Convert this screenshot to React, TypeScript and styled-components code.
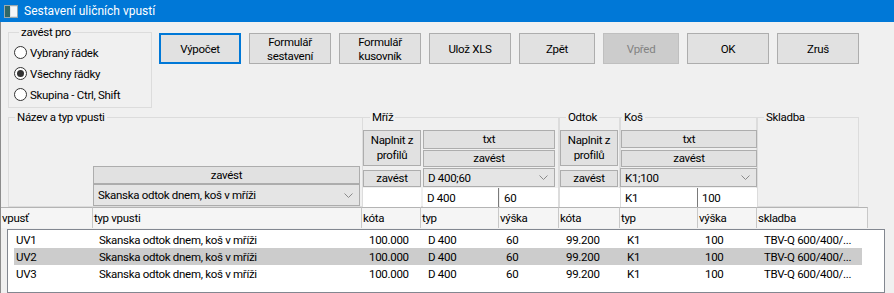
import styled, { createGlobalStyle } from 'styled-components';

const FONT = 'Roboto, "Liberation Sans", sans-serif';

const GlobalStyle = createGlobalStyle`
  html, body {
    margin: 0;
    padding: 0;
    background: #f0f0f0;
  }
  body {
    font-family: ${FONT};
    font-size: 11.5px;
    letter-spacing: -0.3px;
    color: #000;
  }
  * {
    box-sizing: border-box;
  }
`;

const Window = styled.div`
  width: 894px;
  height: 293px;
  overflow: hidden;
  background: #f0f0f0;
  display: flex;
  flex-direction: column;
`;

const TitleBar = styled.div`
  flex: none;
  height: 22px;
  background: #0078d7;
  color: #fff;
  display: flex;
  align-items: center;
  gap: 6px;
  padding-left: 4px;
  font-size: 12px;
  letter-spacing: 0;
`;

const Body = styled.div`
  flex: 1;
  display: flex;
  flex-direction: column;
  border-left: 1px solid #8c8c8c;
`;

const TopRow = styled.div`
  display: flex;
  gap: 7px;
  padding: 3px 0 0 7px;
`;

const Frame = styled.fieldset<{ $offset?: number }>`
  margin: 0;
  padding: 0;
  min-width: 0;
  border: 1px solid #dcdcdc;
  font-size: 11.5px;

  & > legend {
    margin-left: ${({ $offset }) => $offset ?? 5}px;
    padding: 0 2px;
    line-height: 15px;
  }
`;

const OptionsFrame = styled(Frame)`
  width: 144px;
  height: 83px;
  padding: 2px 0 0 5px;
  display: flex;
  flex-direction: column;
`;

const RadioRow = styled.label`
  height: 21px;
  display: flex;
  align-items: center;
  gap: 3px;
`;

const RadioDot = styled.span<{ $checked?: boolean }>`
  width: 13px;
  height: 13px;
  border-radius: 50%;
  border: 1px solid #333;
  background: #fff;
  display: flex;
  align-items: center;
  justify-content: center;

  &::after {
    content: '';
    width: 7px;
    height: 7px;
    border-radius: 50%;
    background: ${({ $checked }) => ($checked ? '#333' : 'transparent')};
  }
`;

const ButtonRow = styled.div`
  display: flex;
  gap: 8px;
  margin-top: 8px;
  height: 31px;
`;

const Button = styled.button<{ $narrow?: boolean; $default?: boolean }>`
  width: ${({ $narrow }) => ($narrow ? 76 : 82)}px;
  height: 31px;
  padding: 0;
  font-family: ${FONT};
  font-size: 11.5px;
  letter-spacing: -0.3px;
  line-height: 14px;
  color: #000;
  background: #e1e1e1;
  border: ${({ $default }) => ($default ? '2px solid #0078d7' : '1px solid #adadad')};

  &:disabled {
    background: #cccccc;
    border-color: #bfbfbf;
    color: #838383;
  }
`;

const Columns = styled.div`
  display: grid;
  grid-template-columns: 92px 269px 59px 78px 60px 61px 78px 59px 111px;
  grid-template-rows: 20px 19px 18px 20px 20px 21px;
  margin-top: 2px;
`;

const GroupFrame = styled(Frame)<{ $col: string }>`
  grid-column: ${({ $col }) => $col};
  grid-row: 1 / 6;
`;

const CellButton = styled.button<{ $col: string; $row: string }>`
  grid-column: ${({ $col }) => $col};
  grid-row: ${({ $row }) => $row};
  padding: 0;
  font-family: ${FONT};
  font-size: 11.5px;
  letter-spacing: -0.3px;
  line-height: 15px;
  color: #000;
  background: #e1e1e1;
  border: 1px solid #adadad;
`;

const Combo = styled.div<{ $col?: string; $row?: string }>`
  grid-column: ${({ $col }) => $col ?? 'auto'};
  grid-row: ${({ $row }) => $row ?? 'auto'};
  display: flex;
  align-items: center;
  justify-content: space-between;
  padding: 0 6px 0 4px;
  background: #e5e5e5;
  border: 1px solid #acacac;
`;

const InputCell = styled.div<{ $col: string; $divider?: boolean }>`
  grid-column: ${({ $col }) => $col};
  grid-row: 5;
  margin-top: 1px;
  padding-left: 4px;
  display: flex;
  align-items: center;
  background: #fff;
  border-right: ${({ $divider }) => ($divider ? '1px solid #7a7a7a' : 'none')};
`;

const NameStack = styled.div`
  grid-column: 2;
  grid-row: 3 / 6;
  margin: 0 2px 1px 0;
  display: flex;
  flex-direction: column;
  justify-content: flex-end;
`;

const HeaderCell = styled.div`
  grid-row: 6;
  padding-left: 1px;
  display: flex;
  align-items: center;
  background: #f5f5f5;
  border-top: 1px solid #b4b4b4;
  border-right: 1px solid #c8c8c8;
`;

const List = styled.div`
  flex: 1;
  margin: 1px 9px 0 6px;
  padding: 1px 0 0 6px;
  background: #fff;
  border: 1px solid #828790;
`;

const Row = styled.div<{ $selected?: boolean }>`
  width: 848px;
  height: 17px;
  display: grid;
  grid-template-columns: 79px 269px 59px 78px 60px 61px 78px 59px 105px;
  align-items: center;
  background: ${({ $selected }) => ($selected ? '#cccccc' : 'transparent')};

  & > span {
    padding-left: 7px;
    white-space: nowrap;
  }
  & > span:first-child {
    padding-left: 2px;
  }
  & > span:nth-child(2) {
    padding-left: 6px;
  }
`;

const Chevron = () => (
  <svg width="9" height="5" viewBox="0 0 9 5">
    <polyline points="0.5,0.5 4.5,4.5 8.5,0.5" fill="none" stroke="#8a8a8a" strokeWidth="1" />
  </svg>
);

const AppIcon = () => (
  <svg width="14" height="13" viewBox="0 0 14 13">
    <rect x="0.5" y="0.5" width="13" height="12" fill="#dde3e6" stroke="#9aa8ad" />
    <rect x="1" y="1" width="5" height="11" fill="#2e6767" />
    <rect x="7" y="2" width="6" height="9" fill="#f5f7f8" />
  </svg>
);

const headers = ['vpusť', 'typ vpusti', 'kóta', 'typ', 'výška', 'kóta', 'typ', 'výška', 'skladba'];

const rows = ['UV1', 'UV2', 'UV3'].map((id) => [
  id,
  'Skanska odtok dnem, koš v mříži',
  '100.000',
  'D 400',
  '60',
  '99.200',
  'K1',
  '100',
  'TBV-Q 600/400/...',
]);

export default function App() {
  return (
    <Window>
      <GlobalStyle />
      <TitleBar>
        <AppIcon />
        Sestavení uličních vpustí
      </TitleBar>
      <Body>
        <TopRow>
          <OptionsFrame>
            <legend>zavést pro</legend>
            <RadioRow>
              <RadioDot />
              Vybraný řádek
            </RadioRow>
            <RadioRow>
              <RadioDot $checked />
              Všechny řádky
            </RadioRow>
            <RadioRow>
              <RadioDot />
              Skupina - Ctrl, Shift
            </RadioRow>
          </OptionsFrame>
          <ButtonRow>
            <Button $default>Výpočet</Button>
            <Button>
              Formulář
              <br />
              sestavení
            </Button>
            <Button>
              Formulář
              <br />
              kusovník
            </Button>
            <Button>Ulož XLS</Button>
            <Button $narrow>Zpět</Button>
            <Button $narrow disabled>
              Vpřed
            </Button>
            <Button>OK</Button>
            <Button>Zruš</Button>
          </ButtonRow>
        </TopRow>

        <Columns>
          <GroupFrame $col="1 / 3" $offset={6} style={{ marginLeft: 7, marginRight: -1 }}>
            <legend>Název a typ vpusti</legend>
          </GroupFrame>
          <GroupFrame $col="3 / 6" $offset={7}>
            <legend>Mříž</legend>
          </GroupFrame>
          <GroupFrame $col="6 / 7" $offset={6}>
            <legend>Odtok</legend>
          </GroupFrame>
          <GroupFrame $col="7 / 9" $offset={1}>
            <legend>Koš</legend>
          </GroupFrame>
          <GroupFrame $col="9 / 10" $offset={6} style={{ marginRight: 9 }}>
            <legend>Skladba</legend>
          </GroupFrame>

          <NameStack>
            <CellButton $col="auto" $row="auto" style={{ height: 18 }}>
              zavést
            </CellButton>
            <Combo style={{ height: 22 }}>
              Skanska odtok dnem, koš v mříži
              <Chevron />
            </Combo>
          </NameStack>

          <CellButton $col="3" $row="2 / 4" style={{ margin: '0 0 1px 1px' }}>
            Naplnit z
            <br />
            profilů
          </CellButton>
          <CellButton $col="4 / 6" $row="2" style={{ margin: '0 4px 0 2px' }}>
            txt
          </CellButton>
          <CellButton $col="4 / 6" $row="3" style={{ margin: '1px 4px 0 2px' }}>
            zavést
          </CellButton>
          <CellButton $col="3" $row="4" style={{ margin: '3px 0 0 1px' }}>
            zavést
          </CellButton>
          <Combo $col="4 / 6" $row="4" style={{ margin: '1px 4px 0 2px' }}>
            D 400;60
            <Chevron />
          </Combo>
          <InputCell $col="3" style={{ marginLeft: 1 }} />
          <InputCell $col="4" $divider style={{ marginLeft: 2 }}>
            D 400
          </InputCell>
          <InputCell $col="5" style={{ margin: '1px 1px 0 1px' }}>
            60
          </InputCell>

          <CellButton $col="6" $row="2 / 4" style={{ margin: '0 2px 1px 1px' }}>
            Naplnit z
            <br />
            profilů
          </CellButton>
          <CellButton $col="6" $row="4" style={{ margin: '3px 2px 0 1px' }}>
            zavést
          </CellButton>
          <InputCell $col="6" style={{ marginLeft: 1 }} />

          <CellButton $col="7 / 9" $row="2" style={{ margin: '0 0 1px 1px' }}>
            txt
          </CellButton>
          <CellButton $col="7 / 9" $row="3" style={{ margin: '1px 0 0 1px' }}>
            zavést
          </CellButton>
          <Combo $col="7 / 9" $row="4" style={{ marginTop: 1 }}>
            K1;100
            <Chevron />
          </Combo>
          <InputCell $col="7" $divider style={{ marginLeft: 1 }}>
            K1
          </InputCell>
          <InputCell $col="8">100</InputCell>

          {headers.map((h, i) => (
            <HeaderCell key={i}>{h}</HeaderCell>
          ))}
        </Columns>

        <List>
          {rows.map((r, i) => (
            <Row key={i} $selected={i === 1}>
              {r.map((c, j) => (
                <span key={j}>{c}</span>
              ))}
            </Row>
          ))}
        </List>
      </Body>
    </Window>
  );
}
